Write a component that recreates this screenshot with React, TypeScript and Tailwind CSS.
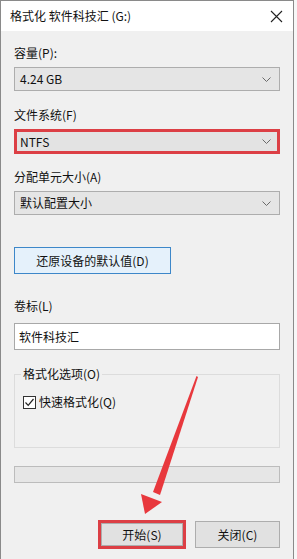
import React from "react";

const font = { fontFamily: '"Microsoft YaHei", "Noto Sans CJK SC", "Noto Sans", sans-serif' };

function Chevron() {
  return (
    <svg width="9" height="5" viewBox="0 0 9 5" className="shrink-0">
      <path d="M0.5 0.5 L4.5 4.5 L8.5 0.5" fill="none" stroke="#6a6a6a" strokeWidth="1" />
    </svg>
  );
}

function Combo({ value, red }: { value: string; red?: boolean }) {
  return (
    <div
      className={
        red
          ? "flex h-[25px] items-center justify-between border-[3px] border-[#dc3f45] bg-[#e3e3e3] pl-[3px] pr-[6px]"
          : "flex h-[24px] items-center justify-between border border-[#adadad] bg-[#e5e5e5] pl-[5px] pr-[8px]"
      }
    >
      <span className="text-[12px] leading-none text-[#111]">{value}</span>
      <Chevron />
    </div>
  );
}

function Label({ children, className = "" }: { children: React.ReactNode; className?: string }) {
  return <div className={"h-[16px] text-[12px] leading-[16px] text-[#111] " + className}>{children}</div>;
}

export default function App() {
  return (
    <div className="relative h-[559px] w-[297px] overflow-hidden bg-[#f7f7f7]" style={font}>
      <div className="flex h-[559px] w-[294px] flex-col border border-b-0 border-[#8a8a8a] bg-[#f0f0f0]">
        {/* title bar */}
        <div className="flex h-[30px] shrink-0 items-center justify-between bg-white pl-[9px] pr-[10px]">
          <span className="text-[12px] text-[#111]">格式化 软件科技汇 (G:)</span>
          <svg width="13" height="13" viewBox="0 0 13 13">
            <path d="M1 1 L12 12 M12 1 L1 12" stroke="#222" strokeWidth="1.1" />
          </svg>
        </div>

        <div className="flex flex-col px-[13px] pt-[14px]">
          <Label>容量(P):</Label>
          <div className="mt-[6px]">
            <Combo value="4.24 GB" />
          </div>

          <Label className="mt-[16px]">文件系统(F)</Label>
          <div className="mt-[6px]">
            <Combo value="NTFS" red />
          </div>

          <Label className="mt-[15px]">分配单元大小(A)</Label>
          <div className="mt-[6px]">
            <Combo value="默认配置大小" />
          </div>

          <button className="mt-[32px] flex h-[27px] w-[157px] items-center justify-center border border-[#3d87c9] bg-[#e5f1fb] text-[12px] text-[#111]">
            还原设备的默认值(D)
          </button>

          <Label className="mt-[24px]">卷标(L)</Label>
          <div className="mt-[9px] flex h-[27px] items-center border border-[#a8a8a8] bg-white px-[4px] text-[12px] text-[#111]">
            软件科技汇
          </div>

          {/* group box */}
          <div className="relative mt-[24px] h-[74px] border border-[#dcdcdc]">
            <span className="absolute -top-[9px] left-[6px] bg-[#f0f0f0] px-[2px] text-[12px] leading-[16px] text-[#111]">
              格式化选项(O)
            </span>
            <div className="mt-[18px] flex items-center pl-[8px]">
              <div className="flex h-[13px] w-[13px] items-center justify-center border border-[#333] bg-white">
                <svg width="11" height="11" viewBox="0 0 11 11">
                  <path d="M1.5 5.5 L4.2 8.3 L9.5 2" fill="none" stroke="#222" strokeWidth="1.2" />
                </svg>
              </div>
              <span className="ml-[3px] text-[12px] text-[#111]">快速格式化(Q)</span>
            </div>
          </div>

          {/* progress */}
          <div className="mt-[18px] h-[17px] border border-[#bcbcbc] bg-[#e6e6e6]" />

          <div className="mt-[37px] flex items-center justify-end gap-[9px]">
            <div className="border-[3px] border-[#dc3f45] p-0">
              <button className="flex h-[23px] w-[82px] items-center justify-center border border-[#adadad] bg-[#e1e1e1] text-[12px] text-[#111]">
                开始(S)
              </button>
            </div>
            <button className="flex h-[27px] w-[85px] items-center justify-center border border-[#adadad] bg-[#e1e1e1] text-[12px] text-[#111]">
              关闭(C)
            </button>
          </div>
        </div>
      </div>

      {/* red annotation arrow */}
      <svg className="pointer-events-none absolute left-0 top-0" width="297" height="559" viewBox="0 0 297 559">
        <path d="M196.5 376 L198 377 L160 495 L153 492 Z" fill="#e8383d" />
        <path d="M145 514 L141 494 L162 502 Z" fill="#e8383d" />
      </svg>
    </div>
  );
}
